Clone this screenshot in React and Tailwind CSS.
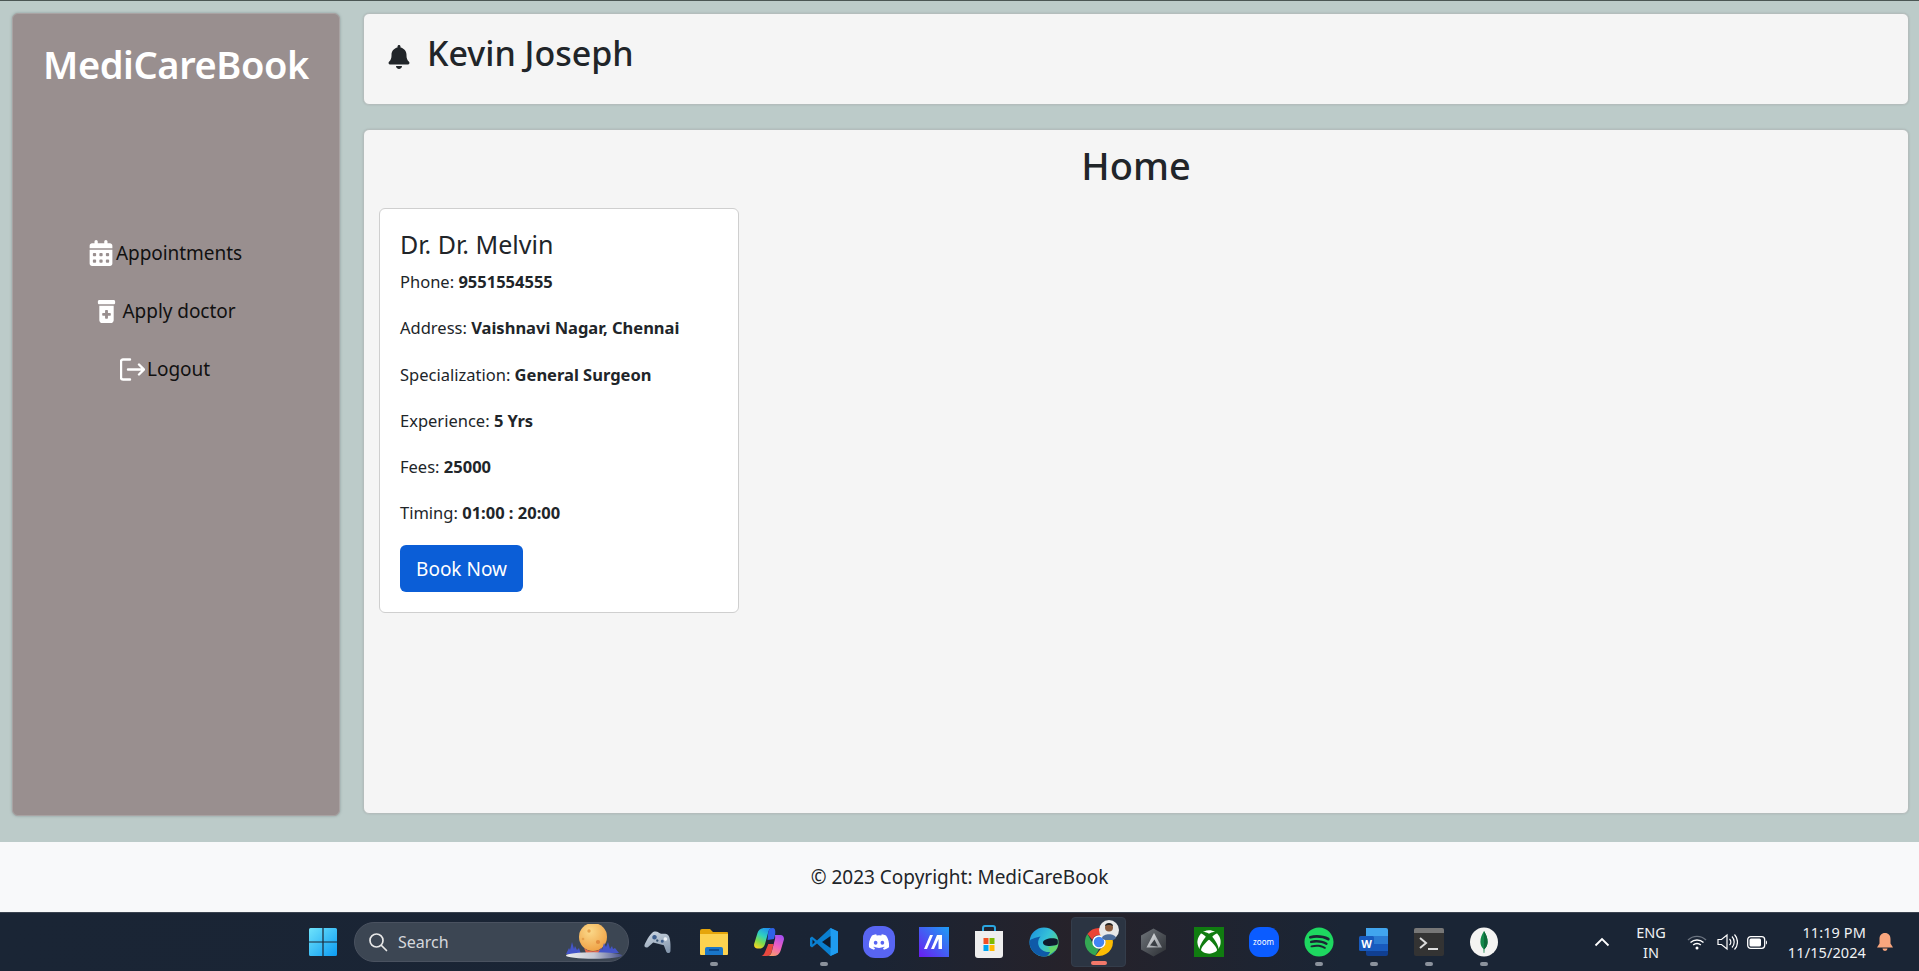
import React from "react";
import { FaBell, FaCalendarDays, FaPrescriptionBottleMedical } from "react-icons/fa6";
import { FaSpotify, FaDiscord, FaXbox } from "react-icons/fa";

const font = "font-['Noto_Sans','Open_Sans',sans-serif]";

function NavItem({ icon, label, gap }) {
  return (
    <div className="flex h-[58px] items-center justify-center pr-[22px] text-[19px] tracking-[-0.05px] text-[#111]">
      {icon}
      <span className={gap}>{label}</span>
    </div>
  );
}

function Field({ label, value }) {
  return (
    <p className="mb-[22.3px] h-[24px] text-[16.5px] leading-[24px] text-[#212529]">
      {label}: <b className="font-bold">{value}</b>
    </p>
  );
}

function Slot({ children, dot, active }) {
  return (
    <div className={`relative flex h-[50px] w-[55px] shrink-0 items-center justify-center rounded ${active ? "bg-[#2b3442] border border-[#343d4b]" : ""}`}>
      {children}
      {dot && <span className="absolute bottom-[1px] left-1/2 h-[4px] w-[8px] -translate-x-1/2 rounded-full bg-[#8b929c]" />}
      {active && <span className="absolute bottom-[1px] left-1/2 h-[4px] w-[16px] -translate-x-1/2 rounded-full bg-[#f1786a]" />}
    </div>
  );
}

const WindowsLogo = () => (
  <svg width="30" height="30" viewBox="0 0 30 30">
    <defs>
      <linearGradient id="win" x1="0" y1="0" x2="1" y2="1">
        <stop offset="0" stopColor="#6fe3fb" />
        <stop offset="1" stopColor="#0c9bf2" />
      </linearGradient>
    </defs>
    <path d="M1 2.500a1.500 1.500 0 0 1 1.500-1.500H14.400V14.400H1z M15.600 1H27.500A1.500 1.500 0 0 1 29 2.500V14.400H15.600z M1 15.600H14.400V29H2.500A1.500 1.500 0 0 1 1 27.500z M15.600 15.600H29V27.500A1.500 1.500 0 0 1 27.500 29H15.600z" fill="url(#win)" />
  </svg>
);

const Moon = () => (
  <svg width="58" height="36" viewBox="0 0 58 36" className="absolute bottom-[1px] right-[5px]">
    <defs>
      <radialGradient id="moon" cx="0.4" cy="0.3" r="0.8">
        <stop offset="0" stopColor="#fbd98a" />
        <stop offset="1" stopColor="#ee9c3e" />
      </radialGradient>
      <linearGradient id="ground" x1="0" y1="0" x2="1" y2="0">
        <stop offset="0" stopColor="#eeeeee" />
        <stop offset="0.5" stopColor="#c5c8d4" />
        <stop offset="1" stopColor="#46518c" />
      </linearGradient>
    </defs>
    <circle cx="28" cy="13" r="14" fill="url(#moon)" />
    <path d="M19 24a14 14 0 0 0 18 0l-2 5H21z" fill="#e2664a" />
    <circle cx="24" cy="7" r="1.700" fill="#e6a14b" />
    <circle cx="33" cy="18" r="2.100" fill="#e28d3f" />
    <circle cx="18" cy="15" r="1.300" fill="#e6a14b" />
    <path d="M1 30l3-6 1 2 2-8 2 7 1-3 2 4 2-2 2 6z" fill="#4455c8" />
    <path d="M33 29l3-5 1 2 2-7 2 4 2-5 2 7 2-3 1 3 2-1 4 5z" fill="#4455c8" />
    <ellipse cx="29" cy="31.500" rx="28" ry="3.300" fill="url(#ground)" />
  </svg>
);

const Controller = () => (
  <svg width="28" height="24" viewBox="0 0 28 24" className="rotate-[14deg]">
    <defs>
      <linearGradient id="ctl" x1="0" y1="0" x2="1" y2="1">
        <stop offset="0" stopColor="#cfd9e4" />
        <stop offset="1" stopColor="#7f92a8" />
      </linearGradient>
    </defs>
    <path d="M7 3c3-1.500 5 .5 7 .5S18 1.500 21 3c3 1.500 5.500 10 6.300 15 .4 2.500-2.300 3.500-4 1.500L19.500 14h-11L4.700 19.500c-1.700 2-4.400 1-4-1.500C1.500 13 4 4.500 7 3z" fill="url(#ctl)" />
    <circle cx="8.500" cy="8.500" r="2.300" fill="#3d5e8d" />
    <circle cx="19.500" cy="7.500" r="1.800" fill="#eef2f7" />
    <circle cx="17" cy="10.500" r="1.500" fill="#3d5e8d" />
    <circle cx="12" cy="11" r="1.200" fill="#35506f" />
  </svg>
);

const Explorer = () => (
  <svg width="30" height="28" viewBox="0 0 30 28">
    <path d="M1 3a2 2 0 0 1 2-2h8l3 3h14a1 1 0 0 1 1 1v4H1z" fill="#e5a50a" />
    <path d="M1 6h28v20a1 1 0 0 1-1 1H2a1 1 0 0 1-1-1z" fill="#fcd24f" />
    <path d="M6 27v-6a2 2 0 0 1 2-2h14a2 2 0 0 1 2 2v6z" fill="#1976c9" />
    <rect x="10" y="21" width="10" height="2" fill="#0d4f94" />
  </svg>
);

const Copilot = () => (
  <svg width="30" height="28" viewBox="0 0 30 28">
    <defs>
      <linearGradient id="co1" x1="0.700" y1="0" x2="0.200" y2="1">
        <stop offset="0" stopColor="#1f8ff0" />
        <stop offset="0.4" stopColor="#2fd0c0" />
        <stop offset="0.700" stopColor="#7ddc4c" />
        <stop offset="1" stopColor="#f7d423" />
      </linearGradient>
      <linearGradient id="co2" x1="0.700" y1="0" x2="0.300" y2="1">
        <stop offset="0" stopColor="#a84ff0" />
        <stop offset="0.500" stopColor="#f05fc0" />
        <stop offset="1" stopColor="#f89a6c" />
      </linearGradient>
    </defs>
    <path d="M11 0h8c-2.500 0-4 1.500-4.700 4L11 16c-.8 3-3 4.500-5.500 4.500H3.500C1 20.500-.4 18.300.2 15.700L3.500 5C4.500 1.800 7 0 11 0z" fill="url(#co1)" />
    <path d="M14.300 16L11 24c-.7 2-2 3.500-3.500 4h5c2.500 0 4-1.500 5-3.500l2-8.500z" fill="#e8483f" />
    <path d="M21 7h5.500c2.500 0 4 2.300 3.300 5l-3.300 11c-1 3-3.500 5-7 5H13c2.500 0 4-1.500 4.700-4L21 11c.4-1.500 0-4 0-4z" fill="url(#co2)" />
    <path d="M19 0c2.500 0 2.500 4 2 7l-1 4-6.500 1L14.300 4C15 1.500 16.500 0 19 0z" fill="#2f62e8" />
  </svg>
);

const VSCode = () => (
  <svg width="30" height="30" viewBox="0 0 30 30">
    <path d="M21.500 1l7.500 3.500v21L21.500 29 8 16.500 3 20.500 1 19v-8l2-1.500 5 4z" fill="#0a7fd0" />
    <path d="M21.500 1l7.500 3.500v21L21.500 29z" fill="#1f9cf0" />
    <path d="M21.500 9L13 15l8.500 6z" fill="#0f1b2d" />
    <path d="M3.500 12.500L6 15l-2.500 2.500z" fill="#0f1b2d" />
  </svg>
);

const MApp = () => (
  <svg width="30" height="30" viewBox="0 0 30 30">
    <defs>
      <linearGradient id="mm" x1="0" y1="1" x2="1" y2="0">
        <stop offset="0" stopColor="#6a1cf0" />
        <stop offset="1" stopColor="#1d9ef5" />
      </linearGradient>
    </defs>
    <rect width="30" height="30" fill="url(#mm)" />
    <path d="M5 22L11 8h3L8 22z M12 22L18 8h5v14h-3.500v-10L15 22z" fill="#fff" />
  </svg>
);

const Store = () => (
  <svg width="30" height="34" viewBox="0 0 30 34">
    <path d="M9 6V3a2 2 0 0 1 2-2h8a2 2 0 0 1 2 2v3" fill="none" stroke="#2aa6e0" strokeWidth="2" />
    <path d="M1 6h28v24a3 3 0 0 1-3 3H4a3 3 0 0 1-3-3z" fill="#eeeeee" />
    <rect x="9.500" y="13" width="5" height="6" fill="#f25022" />
    <rect x="15.500" y="13" width="5" height="6" fill="#7fba00" />
    <rect x="9.500" y="20" width="5" height="6" fill="#00a4ef" />
    <rect x="15.500" y="20" width="5" height="6" fill="#ffb900" />
  </svg>
);

const Edge = () => (
  <svg width="30" height="30" viewBox="0 0 30 30">
    <defs>
      <linearGradient id="ed1" x1="0" y1="0.200" x2="1" y2="0.800">
        <stop offset="0" stopColor="#1e96dd" />
        <stop offset="0.500" stopColor="#35c1d8" />
        <stop offset="1" stopColor="#62d66b" />
      </linearGradient>
    </defs>
    <circle cx="15" cy="15" r="14.500" fill="url(#ed1)" />
    <path d="M.5 15c0 8 6.500 14.500 14.500 14.500 5 0 9-2.500 11.500-6-4 2-10 2.500-14-1-4-3-4.500-9-1-13C6 11 .5 12 .5 15z" fill="#0f5aa8" />
    <path d="M15 13.500c-1.500 1-1.500 3.500.5 4.500 3 1.500 9 1.200 13-.5.500-1.500.5-3.500 0-5-2-1.500-9-2-13.500 1z" fill="#0f1b2d" />
    <path d="M19 20c4 0 8.500-.5 9.500-3-1 6-6 11-11 12 4-2 5-6 1.500-9z" fill="#62d66b" />
  </svg>
);

const Chrome = () => (
  <div className="relative h-[30px] w-[30px]">
    <svg width="30" height="30" viewBox="0 0 30 30">
      <path d="M15 1a14 14 0 0 1 12.100 7H15a7 7 0 0 0-6.600 4.700L3.400 7A14 14 0 0 1 15 1z" fill="#ea4335" />
      <path d="M3.400 7l5.900 10.200A7 7 0 0 0 15 22l-3.700 6.500A14 14 0 0 1 3.400 7z" fill="#34a853" />
      <path d="M27.100 8A14 14 0 0 1 15 29h-3.700l5.600-7.300A7 7 0 0 0 20.800 12L15 8z" fill="#fbbc04" />
      <circle cx="15" cy="15" r="6" fill="#4285f4" stroke="#fff" strokeWidth="1.500" />
    </svg>
    <svg width="20" height="20" viewBox="0 0 20 20" className="absolute -right-[5px] -top-[7px]">
      <circle cx="10" cy="10" r="10" fill="#e8e8e8" />
      <circle cx="10" cy="7.500" r="4" fill="#8a5a3c" />
      <path d="M6 6c0-4 8-4 8 0-2-1.500-6-1.500-8 0z" fill="#222" />
      <path d="M3 18c1-5 13-5 14 0a10 10 0 0 1-14 0z" fill="#4d6d9a" />
    </svg>
  </div>
);

const Hex = () => (
  <svg width="27" height="29" viewBox="0 0 27 29">
    <defs>
      <linearGradient id="hx" x1="0" y1="0" x2="1" y2="1">
        <stop offset="0" stopColor="#70757b" />
        <stop offset="1" stopColor="#2b2e33" />
      </linearGradient>
      <linearGradient id="hx2" x1="0" y1="0" x2="1" y2="1">
        <stop offset="0" stopColor="#e6e8ea" />
        <stop offset="1" stopColor="#8d9197" />
      </linearGradient>
    </defs>
    <path d="M13.500 .5L26 7.500v14L13.500 28.500 1 21.500v-14z" fill="url(#hx)" />
    <path d="M14 5L22 19.500H6.500z" fill="url(#hx2)" />
    <path d="M14.500 11.500L10 17.500l8 1z" fill="#3a3e44" />
  </svg>
);

const Xbox = () => (
  <div className="flex h-[30px] w-[30px] items-center justify-center bg-[#107c10]">
    <FaXbox className="text-[24px] text-white" />
  </div>
);

const Zoom = () => (
  <div className="flex h-[30px] w-[30px] items-center justify-center rounded-[11px] bg-[#0b5cff]">
    <span className={`${font} text-[8px] leading-none text-white`}>zoom</span>
  </div>
);

const Word = () => (
  <svg width="30" height="30" viewBox="0 0 30 30">
    <path d="M7 1h20a2 2 0 0 1 2 2v6H7z" fill="#41a5ee" />
    <rect x="7" y="9" width="22" height="8" fill="#2b7cd3" />
    <rect x="7" y="17" width="22" height="7" fill="#185abd" />
    <path d="M7 24h22v3a2 2 0 0 1-2 2H9a2 2 0 0 1-2-2z" fill="#103f91" />
    <rect x="0" y="9" width="15" height="15" rx="1.500" fill="#185abd" />
    <text x="7.500" y="20.500" textAnchor="middle" fontSize="11" fontWeight="700" fill="#fff" fontFamily="Noto Sans">W</text>
  </svg>
);

const Terminal = () => (
  <svg width="30" height="30" viewBox="0 0 30 30">
    <rect y="1" width="30" height="28" rx="2" fill="#333" />
    <path d="M0 3a2 2 0 0 1 2-2h26a2 2 0 0 1 2 2v3H0z" fill="#777" />
    <path d="M6 11l6 5-6 5" fill="none" stroke="#ddd" strokeWidth="2" />
    <rect x="14" y="21" width="10" height="2" fill="#ddd" />
  </svg>
);

const Mongo = () => (
  <svg width="30" height="30" viewBox="0 0 30 30">
    <ellipse cx="15" cy="15" rx="14" ry="14.500" fill="#f4f4f2" />
    <path d="M15 4c2.200 3.500 3.600 7 3.600 11 0 3.500-1.600 5.500-3 7l-.3 4h-.6l-.3-4c-1.400-1.500-3-3.500-3-7 0-4 1.400-7.500 3.600-11z" fill="#13894a" />
    <path d="M15 4c2.200 3.500 3.600 7 3.600 11 0 3.500-1.600 5.500-3 7l-.6 0z" fill="#0e6b3a" />
  </svg>
);

const Tray = () => (
  <div className="ml-auto flex h-full items-center text-[#f0f2f4]">
    <svg width="16" height="10" viewBox="0 0 16 10" className="mr-[25px]">
      <path d="M1.500 8.500L8 2l6.500 6.500" fill="none" stroke="#fff" strokeWidth="1.800" />
    </svg>
    <div className="w-[32px] text-center text-[14.500px] leading-[20px]">
      <div>ENG</div>
      <div>IN</div>
    </div>
    <svg width="20" height="16" viewBox="0 0 20 16" className="ml-[20px]">
      <path d="M1 6a13 13 0 0 1 18 0" fill="none" stroke="#6b7480" strokeWidth="1.400" />
      <path d="M3.500 8.500a9.500 9.500 0 0 1 13 0" fill="none" stroke="#fff" strokeWidth="1.400" />
      <path d="M6.200 11a5.500 5.500 0 0 1 7.600 0" fill="none" stroke="#fff" strokeWidth="1.400" />
      <circle cx="10" cy="14" r="1.500" fill="#fff" />
    </svg>
    <svg width="21" height="18" viewBox="0 0 21 18" className="ml-[10px]">
      <path d="M1 6.500h3.500L10 2v14l-5.500-4.500H1z" fill="none" stroke="#fff" strokeWidth="1.200" />
      <path d="M12.500 6a4 4 0 0 1 0 6 M15 3.500a8 8 0 0 1 0 11 M17.500 1.500a11 11 0 0 1 0 15" fill="none" stroke="#fff" strokeWidth="1.200" />
    </svg>
    <svg width="21" height="13" viewBox="0 0 21 13" className="ml-[9px]">
      <rect x="0.700" y="0.700" width="17" height="11.600" rx="3" fill="none" stroke="#fff" strokeWidth="1.300" />
      <rect x="2.500" y="2.500" width="11.500" height="8" rx="1.500" fill="#fff" />
      <path d="M19 4.500a1 2 0 0 1 1 2 1 2 0 0 1-1 2z" fill="#fff" />
    </svg>
    <div className="ml-[18px] w-[80px] whitespace-nowrap text-right text-[14.500px] leading-[20px] tracking-[0.1px]">
      <div>11:19 PM</div>
      <div>11/15/2024</div>
    </div>
    <svg width="18" height="20" viewBox="0 0 18 20" className="ml-[10px] mr-[25px]">
      <path d="M9 1c3.500 0 5.500 2.500 5.500 6v4.500L17 15.500H1l2.500-4V7C3.500 3.500 5.500 1 9 1z" fill="#f9a67e" />
      <path d="M6.500 16.500a2.500 2.500 0 0 0 5 0z" fill="#f9a67e" />
    </svg>
  </div>
);

export default function App() {
  return (
    <div className={`${font} flex h-[971px] flex-col overflow-hidden bg-[#bccbc9]`}>
      <div className="h-px shrink-0 bg-[#4b5654]" />
      <div className="flex h-[841px] shrink-0 items-start pl-3 pt-[12px]">
        <aside className="h-[803px] w-[328px] shrink-0 rounded-[6px] border border-[#a9a3a3] bg-[#998f8f] shadow-[0_0_3px_#8a9a98]">
          <h1 className="mt-[26px] text-center text-[38px] font-semibold leading-[48px] tracking-[-0.4px] text-white">MediCareBook</h1>
          <nav className="mt-[136px]">
            <NavItem gap="ml-[2px]" label="Appointments" icon={<FaCalendarDays className="text-[26px] text-white" />} />
            <NavItem gap="ml-[5px]" label="Apply doctor" icon={<FaPrescriptionBottleMedical className="text-[23px] text-white" />} />
            <NavItem
              gap="ml-[2px]"
              label="Logout"
              icon={
                <svg width="25" height="23" viewBox="0 0 25 23" fill="none" stroke="#fff" strokeWidth="2.400" strokeLinecap="round" strokeLinejoin="round">
                  <path d="M10 1.500H3a2 2 0 0 0-2 2v16a2 2 0 0 0 2 2h7" />
                  <path d="M8 11.500h16M19 6.500l5 5-5 5" />
                </svg>
              }
            />
          </nav>
        </aside>
        <div className="ml-[23px] flex w-[1546px] shrink-0 flex-col gap-[24px]">
          <header className="flex h-[92px] items-start rounded-[6px] border border-[#b4bdbc] bg-[#f5f5f5] pl-[23px] pt-[18px] shadow-[0_0_2px_#a5b0af]">
            <FaBell className="mt-[13px] text-[24px] text-[#212529]" />
            <span className="ml-[16px] text-[34px] font-medium leading-[42px] text-[#212529]">Kevin Joseph</span>
          </header>
          <main className="h-[685px] rounded-[6px] border border-[#b4bdbc] bg-[#f5f5f5] px-[15px] shadow-[0_0_2px_#a5b0af]">
            <h2 className="mt-[11px] text-center text-[38px] font-medium leading-[48px] text-[#212529]">Home</h2>
            <section className="mt-[19px] h-[405px] w-[360px] rounded-[6px] border border-[#cfcfcf] bg-white px-[20px] pt-[21px]">
              <h3 className="mb-[11px] h-[29px] text-[25px] font-normal leading-[29px] text-[#212529]">Dr. Dr. Melvin</h3>
              <Field label="Phone" value="9551554555" />
              <Field label="Address" value="Vaishnavi Nagar, Chennai" />
              <Field label="Specialization" value="General Surgeon" />
              <Field label="Experience" value="5 Yrs" />
              <Field label="Fees" value="25000" />
              <Field label="Timing" value="01:00 : 20:00" />
              <button className="-mt-[3px] block h-[47px] w-[123px] rounded-[6px] bg-[#0b5ed7] pt-[2px] text-[19px] text-white">Book Now</button>
            </section>
          </main>
        </div>
      </div>
      <footer className="flex h-[70px] shrink-0 items-center justify-center bg-[#f8f9fa] text-[19px] text-[#212529]">
        © 2023 Copyright: MediCareBook
      </footer>
      <div className="flex h-[59px] shrink-0 items-center border-t border-[#3a4350] bg-[linear-gradient(90deg,#1a2535_0%,#1a2434_45%,#26222a_56%,#1a2535_70%,#1a2535_100%)]">
        <div className="ml-[295px] flex w-[55px] items-center justify-center"><WindowsLogo /></div>
        <div className="relative ml-[4px] flex h-[40px] w-[275px] items-center rounded-full border border-[#4a5260] bg-[#3c4653] pl-[13px] text-[16px] text-[#d5d8dc]">
          <svg width="20" height="20" viewBox="0 0 20 20" fill="none" stroke="#e8e8e8" strokeWidth="1.700">
            <circle cx="8.500" cy="8.500" r="6.500" />
            <path d="M13.500 13.500l5 5" strokeLinecap="round" />
          </svg>
          <span className="ml-[10px]">Search</span>
          <Moon />
        </div>
        <div className="ml-[2px] flex items-center">
          <Slot><Controller /></Slot>
          <Slot dot><Explorer /></Slot>
          <Slot><Copilot /></Slot>
          <Slot dot><VSCode /></Slot>
          <Slot><FaDiscord className="rounded-[12px] bg-[#5865f2] p-[5px] text-[32px] text-white" /></Slot>
          <Slot><MApp /></Slot>
          <Slot><Store /></Slot>
          <Slot><Edge /></Slot>
          <Slot active><Chrome /></Slot>
          <Slot><Hex /></Slot>
          <Slot><Xbox /></Slot>
          <Slot><Zoom /></Slot>
          <Slot dot><FaSpotify className="text-[30px] text-[#1ed760]" /></Slot>
          <Slot dot><Word /></Slot>
          <Slot dot><Terminal /></Slot>
          <Slot dot><Mongo /></Slot>
        </div>
        <Tray />
      </div>
    </div>
  );
}
